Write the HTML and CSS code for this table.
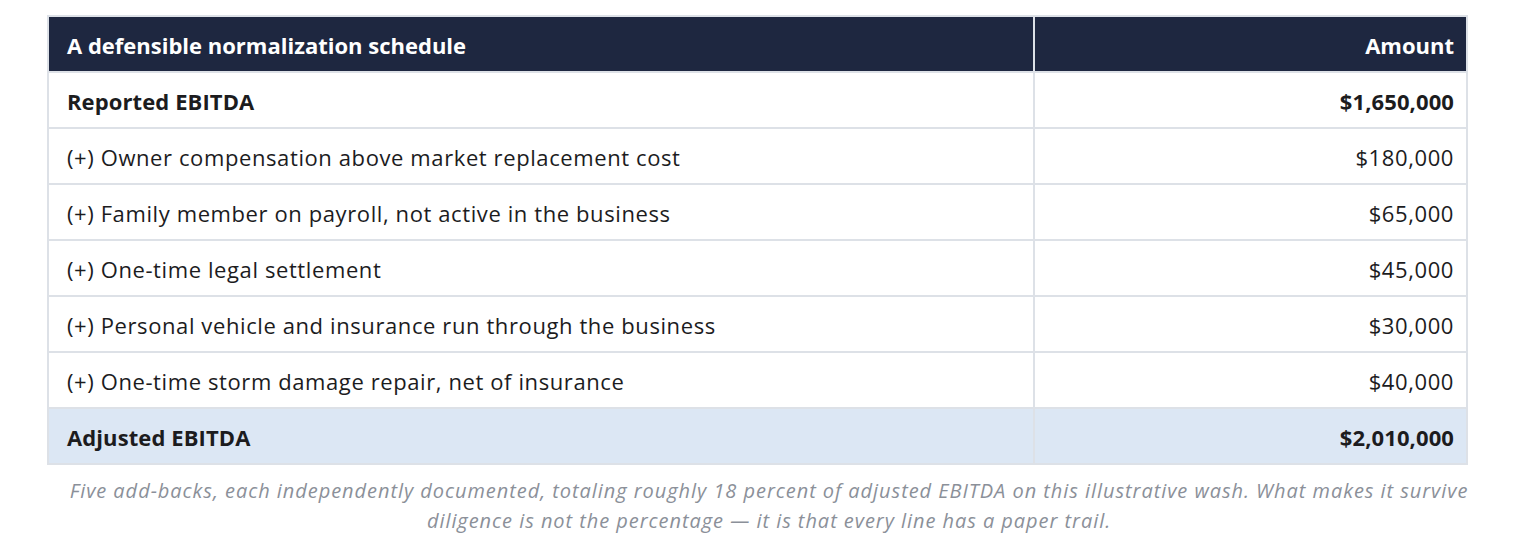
FILE: index.html
```html
<!DOCTYPE html>
<html lang="en">
<head>
<meta charset="utf-8">
<title>Normalization schedule</title>
<link rel="stylesheet" href="styles.css">
</head>
<body>
<div class="page">
  <table class="schedule">
    <thead>
      <tr>
        <th class="label">A defensible normalization schedule</th>
        <th class="amount">Amount</th>
      </tr>
    </thead>
    <tbody>
      <tr class="strong">
        <td class="label">Reported EBITDA</td>
        <td class="amount">$1,650,000</td>
      </tr>
      <tr>
        <td class="label">(+) Owner compensation above market replacement cost</td>
        <td class="amount">$180,000</td>
      </tr>
      <tr>
        <td class="label">(+) Family member on payroll, not active in the business</td>
        <td class="amount">$65,000</td>
      </tr>
      <tr>
        <td class="label">(+) One-time legal settlement</td>
        <td class="amount">$45,000</td>
      </tr>
      <tr>
        <td class="label">(+) Personal vehicle and insurance run through the business</td>
        <td class="amount">$30,000</td>
      </tr>
      <tr>
        <td class="label">(+) One-time storm damage repair, net of insurance</td>
        <td class="amount">$40,000</td>
      </tr>
      <tr class="strong total">
        <td class="label">Adjusted EBITDA</td>
        <td class="amount">$2,010,000</td>
      </tr>
    </tbody>
  </table>
  <p class="note">Five add-backs, each independently documented, totaling roughly 18 percent of adjusted EBITDA on this illustrative wash. What makes it survive diligence is not the percentage — it is that every line has a paper trail.</p>
</div>
</body>
</html>
```

FILE: styles.css
```css
html, body {
  margin: 0;
  padding: 0;
  background: #ffffff;
}

body {
  font-family: "Open Sans", "Noto Sans", sans-serif;
  color: #1c1c1e;
}

.page {
  padding-top: 15px;
}

.schedule {
  margin-left: 47px;
  width: 1421px;
  border-collapse: collapse;
  font-size: 22px;
  line-height: 30px;
  letter-spacing: 0.6px;
}

.schedule th,
.schedule td {
  border: 2px solid #dde1e7;
  padding: 13px 12px 11px 18px;
  text-align: left;
}

.schedule th {
  background: #1e2740;
  color: #ffffff;
  font-weight: 700;
  letter-spacing: 0;
}

.schedule .label {
  width: 954px;
}

.schedule .amount {
  text-align: right;
}

.strong td {
  font-weight: 700;
  letter-spacing: 0.1px;
}

.total td {
  background: #dce7f4;
}

.note {
  margin: 11px 0 0;
  padding: 0 50px;
  text-align: center;
  font-style: italic;
  font-size: 20px;
  line-height: 30px;
  letter-spacing: 0.95px;
  color: #8b9099;
}
```
